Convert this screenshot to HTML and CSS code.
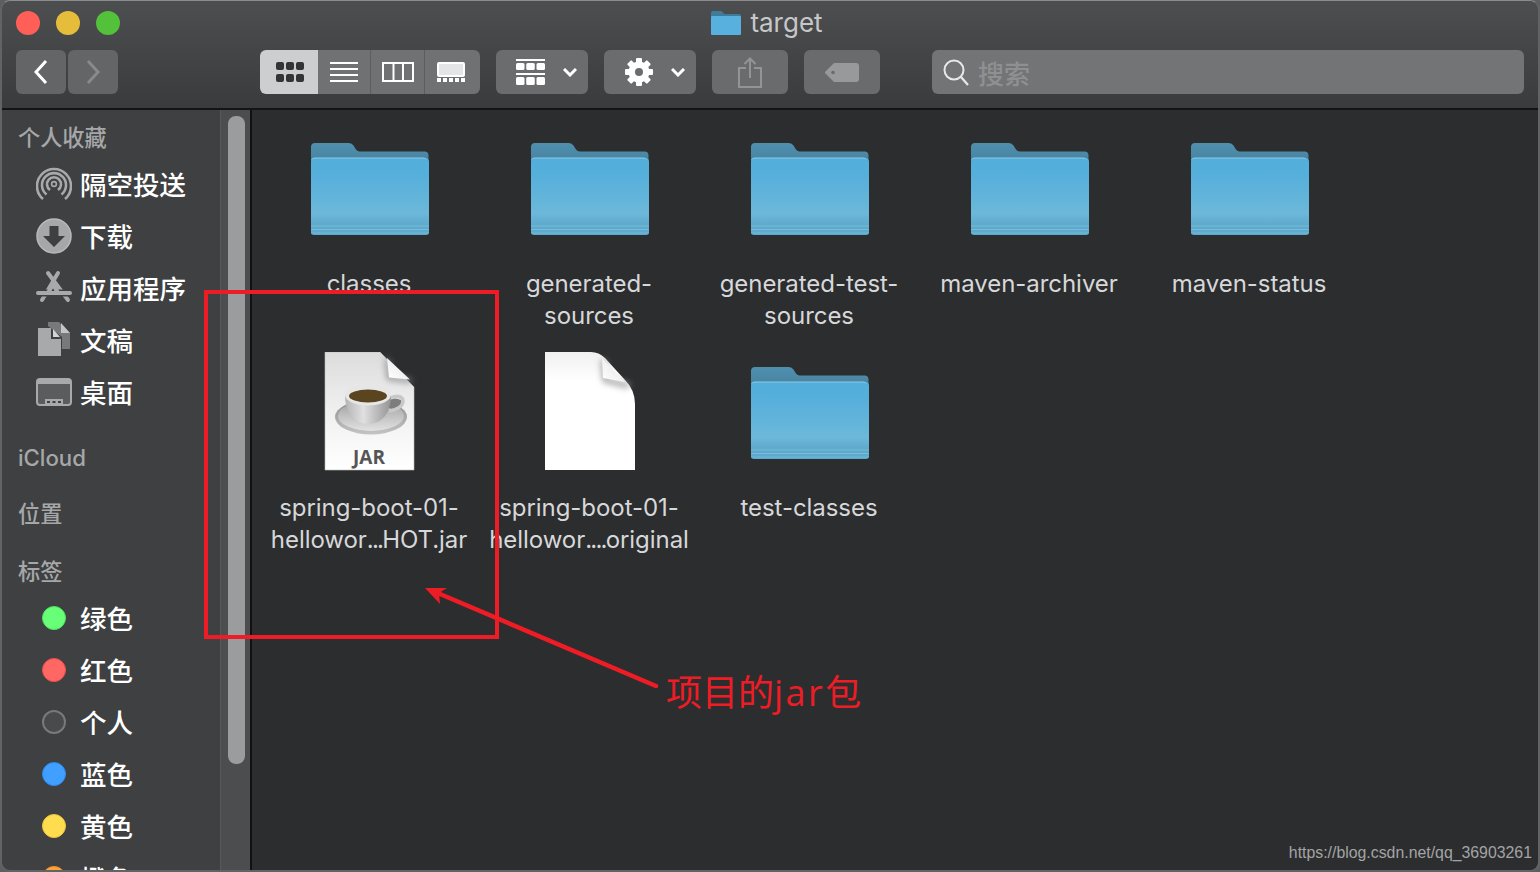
FILE: index.html
```html
<!DOCTYPE html>
<html lang="zh">
<head>
<meta charset="utf-8">
<title>target</title>
<link rel="stylesheet" href="styles.css">
</head>
<body>
<svg class="defs" aria-hidden="true">
  <defs>
    <filter id="soft" x="-40%" y="-40%" width="180%" height="180%"><feGaussianBlur stdDeviation="3"/></filter>
    <linearGradient id="fBack" x1="0" y1="0" x2="0" y2="1"><stop offset="0" stop-color="#4f8fad"/><stop offset="1" stop-color="#3f7a98"/></linearGradient>
    <linearGradient id="fFront" x1="0" y1="0" x2="0" y2="1"><stop offset="0" stop-color="#52aedb"/><stop offset=".2" stop-color="#55afdb"/><stop offset=".72" stop-color="#6cb8da"/><stop offset=".88" stop-color="#5ea9cb"/><stop offset="1" stop-color="#5cabcf"/></linearGradient>
    <linearGradient id="jarPage" x1="0" y1="0" x2="0" y2="1"><stop offset="0" stop-color="#dcdcdc"/><stop offset=".5" stop-color="#f0f0f0"/><stop offset="1" stop-color="#fff"/></linearGradient>
    <linearGradient id="blankPage" x1="0" y1="0" x2="0" y2="1"><stop offset="0" stop-color="#f0f0f0"/><stop offset=".25" stop-color="#fff"/><stop offset="1" stop-color="#fff"/></linearGradient>
    <linearGradient id="foldG" x1="0" y1="1" x2="1" y2="0"><stop offset="0" stop-color="#fff"/><stop offset="1" stop-color="#e2e2e2"/></linearGradient>
    <linearGradient id="cupG" x1="0" y1="0" x2="1" y2="0"><stop offset="0" stop-color="#b4b4b4"/><stop offset=".4" stop-color="#e0e0e0"/><stop offset="1" stop-color="#949494"/></linearGradient>
    <linearGradient id="saucerG" x1="0" y1="0" x2="0" y2="1"><stop offset="0" stop-color="#8d8d8d"/><stop offset="1" stop-color="#c4c4c4"/></linearGradient>
    <linearGradient id="saucerIn" x1="0" y1="0" x2="0" y2="1"><stop offset="0" stop-color="#a0a0a0"/><stop offset="1" stop-color="#e2e2e2"/></linearGradient>
    <symbol id="folder" viewBox="0 0 120 120">
      <path d="M2 19q0-4 4-4h34q3 0 4.500 2.500l2.500 4q1.500 2 3.500 2h65q4 0 4 4v20H2z" fill="url(#fBack)"/>
      <path d="M2 34q0-4 4-4h110q4 0 4 4v70q0 3-3 3H5q-3 0-3-3z" fill="url(#fFront)"/>
      <path d="M2 98h118M2 101.500h118" stroke="#7fc1df" stroke-width=".8" fill="none"/>
      <path d="M2 105h118" stroke="#79bcdb" stroke-width=".8" fill="none"/>
      <path d="M2.500 31.500q1-1.500 3.500-1.500h108q3 0 3.500 1.500" stroke="#8ccbe8" fill="none"/>
    </symbol>
  </defs>
</svg>

<div class="window">
  <header class="toolbar">
    <div class="title-row">
      <div class="lights">
        <span class="light light-red"></span>
        <span class="light light-yellow"></span>
        <span class="light light-green"></span>
      </div>
      <div class="title">
        <svg class="title-icon" viewBox="0 0 30 24"><path d="M0 2q0-2 2-2h8q1 0 2 1.500t2 1.500h14q2 0 2 2v4H0z" fill="#3f7c9c"/><path d="M0 6q0-1 1-1h28q1 0 1 1v17q0 1-1 1H1q-1 0-1-1z" fill="#58b0de"/></svg>
        <span>target</span>
      </div>
    </div>
    <div class="tools">
      <div class="nav-group">
        <button class="btn btn-nav"><svg width="14" height="26" viewBox="0 0 14 26"><path d="M12 2 2 13l10 11" class="stroke-white"/></svg></button>
        <button class="btn btn-nav"><svg width="14" height="26" viewBox="0 0 14 26"><path d="m2 2 10 11L2 24" class="stroke-dim"/></svg></button>
      </div>
      <div class="view-group">
        <button class="seg seg-active">
          <svg width="28" height="20" viewBox="0 0 28 20"><g fill="#333436"><rect width="8" height="8" rx="2"/><rect x="10" width="8" height="8" rx="2"/><rect x="20" width="8" height="8" rx="2"/><rect y="12" width="8" height="8" rx="2"/><rect x="10" y="12" width="8" height="8" rx="2"/><rect x="20" y="12" width="8" height="8" rx="2"/></g></svg>
        </button>
        <button class="seg seg-list">
          <svg width="28" height="20" viewBox="0 0 28 20"><path d="M0 1h28M0 7h28M0 13h28M0 19h28" stroke="#fff" stroke-width="2" fill="none"/></svg>
        </button>
        <button class="seg seg-col">
          <svg width="32" height="20" viewBox="0 0 32 20"><path d="M1 1h30v18H1zM11.500 1v18M21 1v18" stroke="#fff" stroke-width="2" fill="none"/></svg>
        </button>
        <button class="seg seg-gal">
          <svg width="28" height="20" viewBox="0 0 28 20"><rect x="1" y="1" width="26" height="13" rx="1" fill="#e4e5e6" stroke="#fff" stroke-width="2"/><g fill="#fff"><rect y="16" width="4" height="4"/><rect x="6" y="16" width="4" height="4"/><rect x="12" y="16" width="4" height="4"/><rect x="18" y="16" width="4" height="4"/><rect x="24" y="16" width="4" height="4"/></g></svg>
        </button>
      </div>
      <button class="btn btn-menu btn-arrange">
        <svg width="29" height="27" viewBox="0 0 29 27"><g fill="#fff"><rect width="29" height="2"/><rect y="4" width="8.500" height="7" rx="1.500"/><rect x="10.250" y="4" width="8.500" height="7" rx="1.500"/><rect x="20.500" y="4" width="8.500" height="7" rx="1.500"/><rect y="14" width="29" height="2"/><rect y="18" width="8.500" height="8" rx="1.500"/><rect x="10.250" y="18" width="8.500" height="8" rx="1.500"/><rect x="20.500" y="18" width="8.500" height="8" rx="1.500"/></g></svg>
        <svg width="14" height="9" viewBox="0 0 14 9"><path d="m1 1 6 6 6-6" class="stroke-white"/></svg>
      </button>
      <button class="btn btn-menu btn-action">
        <svg width="28" height="28" viewBox="0 0 28 28"><g fill="#fff"><rect x="11" y="0" width="6" height="28" rx="1"/><rect x="11" y="0" width="6" height="28" rx="1" transform="rotate(45 14 14)"/><rect x="11" y="0" width="6" height="28" rx="1" transform="rotate(90 14 14)"/><rect x="11" y="0" width="6" height="28" rx="1" transform="rotate(135 14 14)"/><circle cx="14" cy="14" r="10.500"/></g><circle cx="14" cy="14" r="4" fill="#6b6c6e"/></svg>
        <svg width="14" height="9" viewBox="0 0 14 9"><path d="m1 1 6 6 6-6" class="stroke-white"/></svg>
      </button>
      <button class="btn btn-share">
        <svg width="24" height="31" viewBox="0 0 24 31"><path d="M8 11H1v19h22V11h-7M12 21V1.500M6.500 7 12 1.500 17.500 7" fill="none" stroke="#939495" stroke-width="2"/></svg>
      </button>
      <button class="btn btn-tag">
        <svg width="34" height="19" viewBox="0 0 34 19"><path d="M9 0h22q3 0 3 3v13q0 3-3 3H9L0 10V9z" fill="#98999a"/><circle cx="8" cy="9.500" r="1.800" fill="#6b6c6e"/></svg>
      </button>
      <div class="search">
        <svg width="26" height="27" viewBox="0 0 26 27"><circle cx="11" cy="11" r="9.500" fill="none" stroke="#e8e8e8" stroke-width="2"/><path d="m18 18 7 8" stroke="#e8e8e8" stroke-width="2.200"/></svg>
        <span>搜索</span>
      </div>
    </div>
  </header>

  <div class="content">
    <aside class="sidebar">
      <nav class="side-list">
        <div class="side-head">个人收藏</div>
        <div class="side-items">
          <div class="side-item">
            <svg class="side-icon" viewBox="0 0 36 36"><g fill="none" stroke="#a8a9aa" stroke-width="2.600"><path d="M7 33a17 17 0 1 1 22 0"/><path d="M10.500 28.500a12 12 0 1 1 15 0"/><path d="M14 24a7 7 0 1 1 8 0"/></g><circle cx="18" cy="18" r="2.400" fill="none" stroke="#a8a9aa" stroke-width="1.600"/></svg>
            <span class="side-text">隔空投送</span>
          </div>
          <div class="side-item">
            <svg class="side-icon" viewBox="0 0 36 36"><circle cx="18" cy="18" r="17" fill="#a6a7a8" stroke="#b8b9ba" stroke-width="1.500"/><path d="M13.500 8h9v10H29L18 29 7 18h6.500z" fill="#3d3f41"/></svg>
            <span class="side-text">下载</span>
          </div>
          <div class="side-item">
            <svg class="side-icon" viewBox="0 0 36 36"><g fill="none" stroke-linecap="round"><path d="M22 3 6 30M12 3l20 27" stroke="#a8a9aa" stroke-width="4"/><path d="M0 23h36" stroke="#3e4042" stroke-width="7" stroke-linecap="butt"/><path d="M2 23h32" stroke="#a8a9aa" stroke-width="4"/><path d="M12.500 22 17 14.500 21.500 22" stroke="#a8a9aa" stroke-width="4" stroke-linecap="butt"/></g></svg>
            <span class="side-text">应用程序</span>
          </div>
          <div class="side-item">
            <svg class="side-icon" viewBox="0 0 36 36"><path d="M12 0h11l11 11v16h-8V15L12 4z" fill="#77797b"/><path d="M2 6h13l10 11v17H2z" fill="#a8a9aa"/><path d="M15 6v11h10z" fill="#3e4042"/><path d="M17 7v8h7z" fill="#d3d3d3"/><path d="M25 1l9 10h-9z" fill="#c4c5c6"/></svg>
            <span class="side-text">文稿</span>
          </div>
          <div class="side-item">
            <svg class="side-icon" viewBox="0 0 36 36"><rect x="1" y="5" width="34" height="26" rx="3" fill="#5a5c5e" stroke="#a8a9aa" stroke-width="2"/><rect x="2" y="6" width="32" height="4" fill="#a8a9aa"/><rect x="9" y="25" width="18" height="6" fill="#a8a9aa"/><path d="M11 27h3v2h-3zM16.500 27h3v2h-3zM22 27h3v2h-3z" fill="#3e4042"/></svg>
            <span class="side-text">桌面</span>
          </div>
        </div>
        <div class="side-head side-head-icloud">iCloud</div>
        <div class="side-head side-head-loc">位置</div>
        <div class="side-head side-head-tag">标签</div>
        <div class="side-items">
          <div class="side-item"><span class="dot-box"><i class="dot dot-green"></i></span><span class="side-text">绿色</span></div>
          <div class="side-item"><span class="dot-box"><i class="dot dot-red"></i></span><span class="side-text">红色</span></div>
          <div class="side-item"><span class="dot-box"><i class="dot dot-none"></i></span><span class="side-text">个人</span></div>
          <div class="side-item"><span class="dot-box"><i class="dot dot-blue"></i></span><span class="side-text">蓝色</span></div>
          <div class="side-item"><span class="dot-box"><i class="dot dot-yellow"></i></span><span class="side-text">黄色</span></div>
          <div class="side-item"><span class="dot-box"><i class="dot dot-orange"></i></span><span class="side-text">橙色</span></div>
        </div>
      </nav>
      <div class="rail"><div class="thumb"></div></div>
    </aside>

    <main class="files">
      <div class="file">
        <svg class="file-icon" viewBox="0 0 120 120"><use href="#folder"/></svg>
        <div class="file-name">classes</div>
      </div>
      <div class="file">
        <svg class="file-icon" viewBox="0 0 120 120"><use href="#folder"/></svg>
        <div class="file-name">generated-<br>sources</div>
      </div>
      <div class="file">
        <svg class="file-icon" viewBox="0 0 120 120"><use href="#folder"/></svg>
        <div class="file-name">generated-test-<br>sources</div>
      </div>
      <div class="file">
        <svg class="file-icon" viewBox="0 0 120 120"><use href="#folder"/></svg>
        <div class="file-name">maven-archiver</div>
      </div>
      <div class="file">
        <svg class="file-icon" viewBox="0 0 120 120"><use href="#folder"/></svg>
        <div class="file-name">maven-status</div>
      </div>
      <div class="file">
        <svg class="file-icon" viewBox="0 0 120 120">
          <path d="M16 0h55l34 35v83H16z" fill="url(#jarPage)" stroke="#bdbdbd" stroke-width=".6"/>
          <path d="M78 7l2 19 22 3" fill="none" stroke="#8a8a8a" stroke-width="4" filter="url(#soft)"/>
          <path d="M78 6l2 19.500 21 2z" fill="url(#foldG)"/>
          <ellipse cx="62" cy="65" rx="36" ry="17.500" fill="url(#saucerG)"/>
          <ellipse cx="62" cy="64" rx="33" ry="15" fill="url(#saucerIn)"/>
          <ellipse cx="86" cy="52" rx="8" ry="5.500" fill="#7d7d7d"/>
          <path d="M82 46c5-3 12-2 12 3 0 6-8 9-14 10" fill="none" stroke="#c8c8c8" stroke-width="3.500"/>
          <path d="M36 43c0 15 7 29 23 29s23-14 23-29z" fill="url(#cupG)"/>
          <ellipse cx="59" cy="43" rx="23" ry="10.500" fill="#e6e6e6"/>
          <ellipse cx="59" cy="44" rx="19" ry="6.500" fill="#5b4520"/>
          <text x="60" y="112" class="jar-text">JAR</text>
        </svg>
        <div class="file-name">spring-boot-01-<br>hellowor<span class="dots">...</span>HOT.jar</div>
      </div>
      <div class="file">
        <svg class="file-icon" viewBox="0 0 120 120">
          <path d="M16 0h46q8 0 14 6l20 22q10 10 10 24v66H16z" fill="url(#blankPage)"/>
          <path d="M74 8l2 20 24 6" fill="none" stroke="#a0a0a0" stroke-width="5" filter="url(#soft)"/>
          <path d="M73 6l1 20 22 4z" fill="url(#foldG)"/>
        </svg>
        <div class="file-name">spring-boot-01-<br>hellowor<span class="dots">....</span>original</div>
      </div>
      <div class="file">
        <svg class="file-icon" viewBox="0 0 120 120"><use href="#folder"/></svg>
        <div class="file-name">test-classes</div>
      </div>
    </main>
  </div>
</div>

<div class="mark-box"></div>
<svg class="mark-arrow" viewBox="0 0 240 110" width="240" height="110"><path d="M232 100 16 8" stroke="#ee1c25" stroke-width="4.500" stroke-linecap="round" fill="none"/><path d="M1 2h22L15 7l1 11z" fill="#ee1c25"/></svg>
<div class="mark-text">项目的<span class="mark-latin">jar</span>包</div>
<div class="watermark">https://blog.csdn.net/qq_36903261</div>
</body>
</html>
```
FILE: styles.css
```css
* { box-sizing: border-box; }
html, body { margin: 0; height: 100%; }
body {
  position: relative;
  width: 1540px;
  height: 872px;
  overflow: hidden;
  background: #5d5e60;
  font-family: Inter, "Noto Sans CJK SC", sans-serif;
}
.defs { position: absolute; width: 0; height: 0; }
.window {
  width: 1540px;
  height: 872px;
  display: flex;
  flex-direction: column;
  border-radius: 10px;
  overflow: hidden;
  border: 2px solid #626365;
  border-top: 1px solid #8b8c8d;
  border-bottom-width: 2px;
}
.toolbar {
  height: 109px;
  flex: none;
  background: linear-gradient(#4d4e50, #3a3b3c);
  border-bottom: 2px solid #141415;
  padding: 0 14px;
}
.title-row {
  height: 44px;
  display: grid;
  grid-template-columns: 1fr auto 1fr;
  align-items: center;
}
.lights { display: flex; gap: 16px; }
.light { width: 24px; height: 24px; border-radius: 50%; }
.light-red { background: #ff5f57; }
.light-yellow { background: #e6bd3b; }
.light-green { background: #53c13a; }
.title {
  display: flex;
  align-items: center;
  gap: 9px;
  font-size: 26px;
  line-height: 32px;
  color: #c6c7c8;
  margin-right: 6px;
}
.title-icon { width: 30px; height: 24px; }
.tools { display: flex; height: 44px; margin-top: 5px; }
.btn, .seg {
  border: 0;
  padding: 0;
  height: 44px;
  display: flex;
  align-items: center;
  justify-content: center;
  background: #6b6c6e;
}
.btn { border-radius: 6px; }
.nav-group { display: flex; gap: 2px; }
.btn-nav { width: 50px; background: #646567; }
.view-group {
  display: flex;
  margin-left: 142px;
  border-radius: 6px;
  overflow: hidden;
  width: 220px;
}
.seg { background: #707173; }
.seg-active { width: 58px; background: #ccced0; padding-left: 2px; }
.seg-list { width: 53px; border-right: 1px solid #5c5d5f; }
.seg-col { width: 54px; border-right: 1px solid #5c5d5f; }
.seg-gal { width: 55px; padding-right: 4px; }
.btn-menu { width: 92px; }
.btn-arrange { margin-left: 16px; gap: 18px; padding-left: 8px; }
.btn-action { margin-left: 16px; gap: 18px; padding-left: 9px; }
.btn-share { width: 76px; margin-left: 16px; background: #6a6b6c; }
.btn-tag { width: 76px; margin-left: 16px; background: #6a6b6c; }
.search {
  width: 592px;
  margin-left: 52px;
  height: 44px;
  border-radius: 6px;
  background: #737476;
  display: flex;
  align-items: center;
  gap: 9px;
  padding-left: 11px;
  font-size: 26px;
  font-weight: 500;
  color: #8f9091;
}
.stroke-white, .stroke-dim { fill: none; stroke-width: 3; }
.stroke-white { stroke: #fff; }
.stroke-dim { stroke: #88898a; }

.content { flex: 1; display: flex; min-height: 0; }
.sidebar {
  width: 250px;
  flex: none;
  display: flex;
  background: #3e4042;
  border-right: 2px solid #111;
}
.side-list { width: 218px; flex: none; padding-top: 8px; overflow: hidden; }
.side-head {
  height: 40px;
  line-height: 40px;
  padding-left: 16px;
  font-size: 22.2px;
  font-weight: 500;
  color: #a6a7a8;
}
.side-head-icloud { margin-top: 20px; }
.side-head-loc { margin-top: 16px; }
.side-head-tag { margin-top: 18px; }
.side-item {
  height: 52px;
  display: flex;
  align-items: center;
  gap: 8px;
  padding-left: 34px;
  font-size: 26.5px;
  font-weight: 500;
  color: #fff;
}
.side-text { padding-bottom: 2px; }
.side-icon { width: 36px; height: 36px; flex: none; }
.dot-box { width: 36px; display: flex; justify-content: center; flex: none; }
.dot { width: 24px; height: 24px; border-radius: 50%; border: 1px solid; }
.dot-green { background: #68ff78; border-color: #50e060; }
.dot-red { background: #ff6764; border-color: #ef4f4c; }
.dot-none { background: #484a4c; border: 2px solid #77797b; }
.dot-blue { background: #409fff; border-color: #2b8cf0; }
.dot-yellow { background: #ffdd4f; border-color: #eec83c; }
.dot-orange { background: #ffa23c; border-color: #ee9028; }
.rail {
  flex: 1;
  background: #4b4d4f;
  border-left: 1px solid #58595b;
  padding: 6px 5px 0 7px;
}
.thumb { height: 648px; border-radius: 8px; background: #9b9c9e; }

.files {
  flex: 1;
  background: #2c2d2f;
  padding: 18px 0 0 7px;
  display: grid;
  grid-template-columns: repeat(auto-fill, 220px);
  grid-auto-rows: 224px;
  align-content: start;
}
.file { display: flex; flex-direction: column; align-items: center; }
.file-icon { width: 120px; height: 120px; flex: none; }
.file-name {
  margin-top: 20px;
  font-size: 24px;
  line-height: 32px;
  letter-spacing: -0.05px;
  color: #d7d8d9;
  text-align: center;
  white-space: nowrap;
}
.dots { letter-spacing: -1.8px; }
.jar-text {
  font-family: "Open Sans", sans-serif;
  font-weight: 700;
  font-size: 19px;
  fill: #555;
  text-anchor: middle;
}

.mark-box {
  position: absolute;
  left: 204px;
  top: 290px;
  width: 295px;
  height: 349px;
  border: 4px solid #ee1c25;
}
.mark-arrow { position: absolute; left: 424px; top: 586px; }
.mark-text {
  position: absolute;
  left: 666px;
  top: 665px;
  font-family: "Noto Sans CJK SC", sans-serif;
  font-size: 36px;
  line-height: 50px;
  color: #ee1c25;
  white-space: nowrap;
}
.mark-latin {
  font-family: "Open Sans", sans-serif;
  letter-spacing: 2.5px;
}
.watermark {
  position: absolute;
  right: 8px;
  top: 843px;
  font-family: "Liberation Sans", sans-serif;
  font-size: 15.85px;
  line-height: 20px;
  color: #a3a4a5;
}
```
